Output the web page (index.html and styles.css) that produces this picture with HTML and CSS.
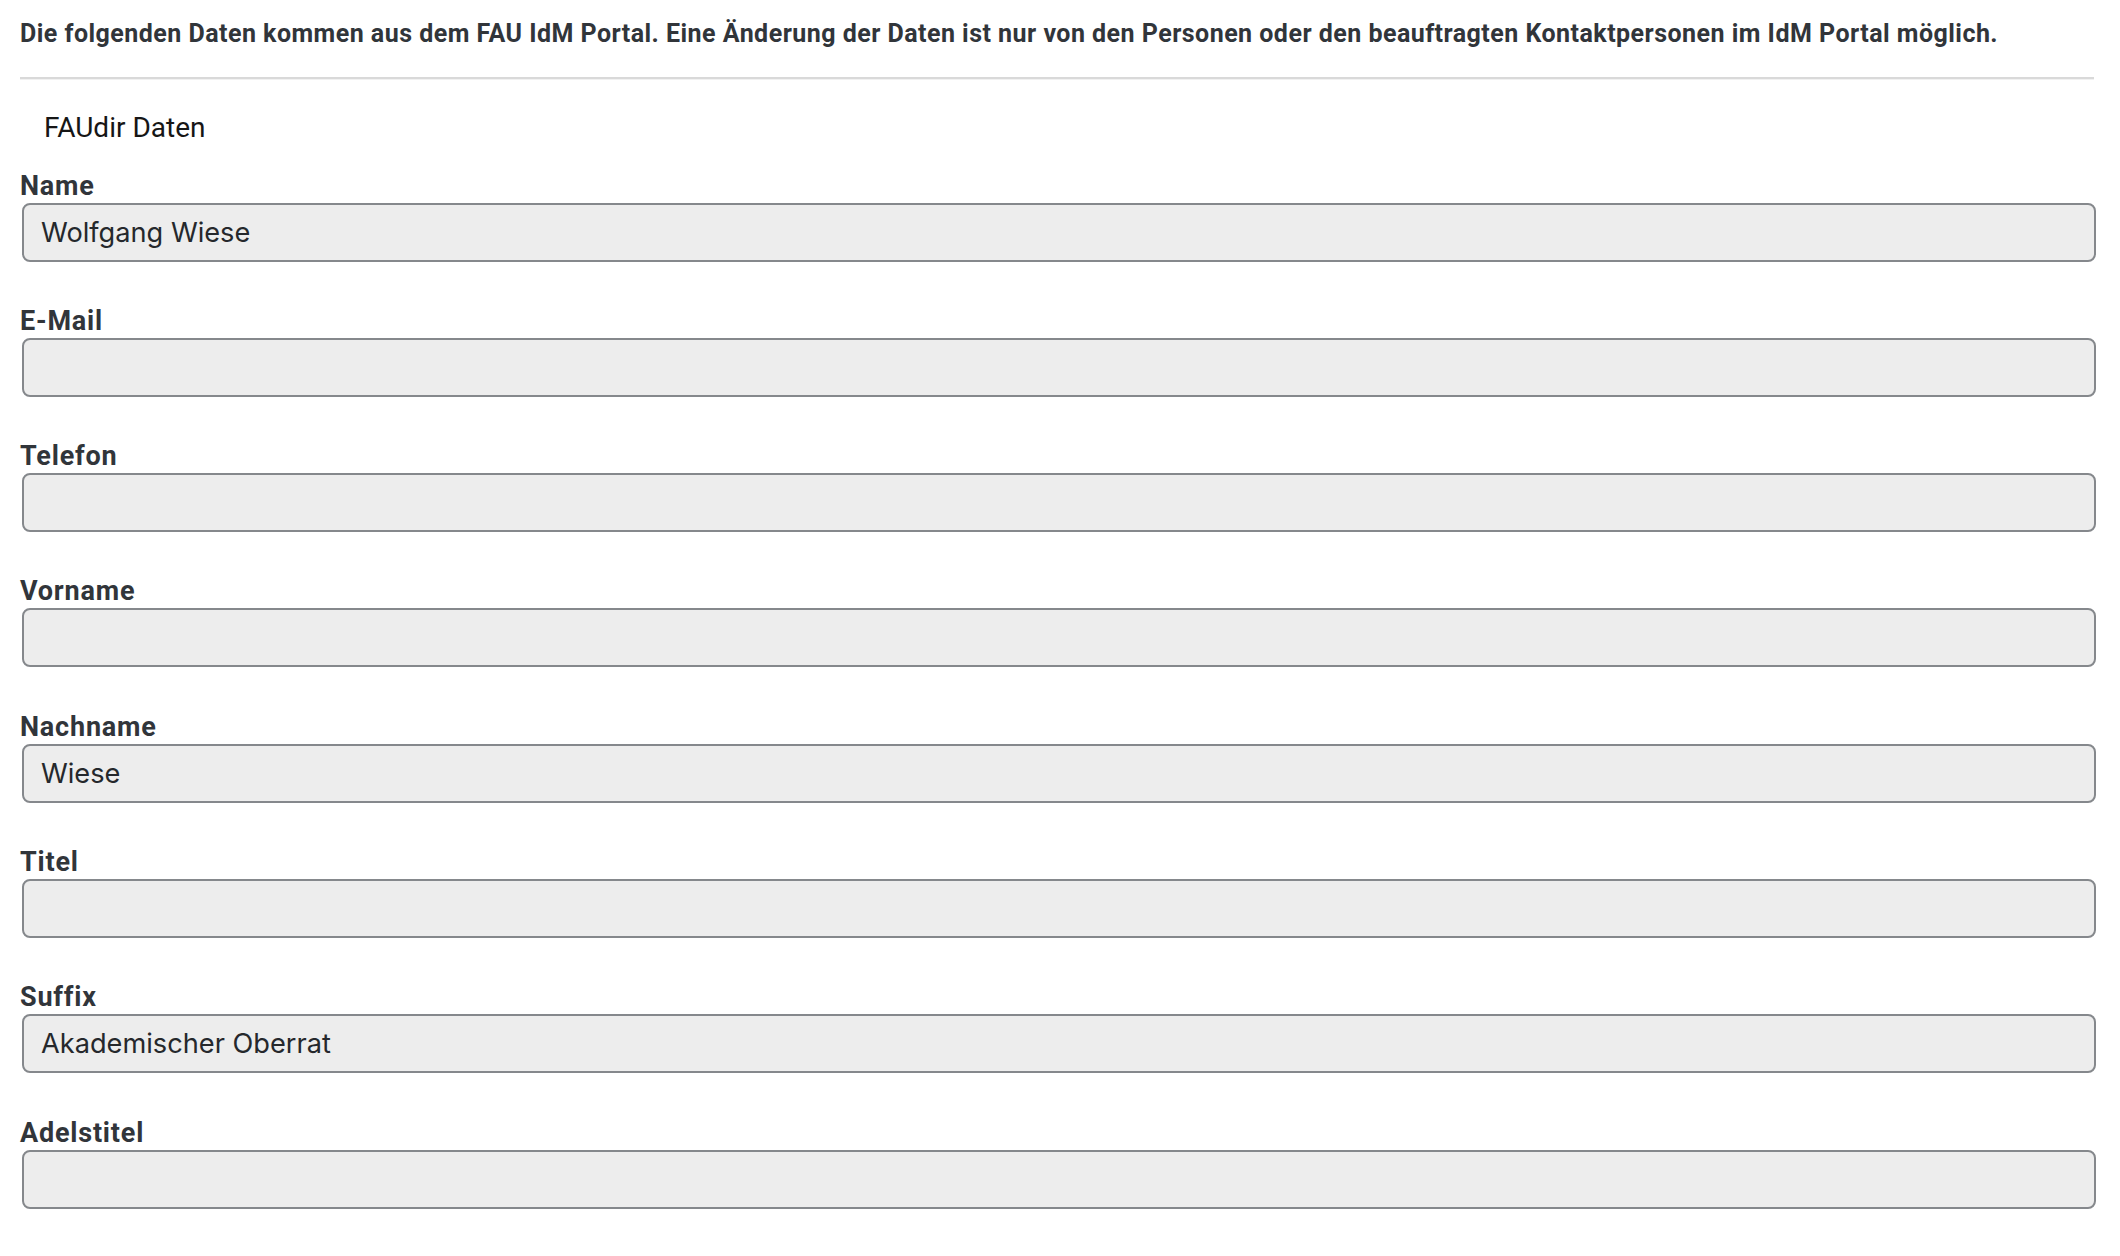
FILE: index.html
```html
<!DOCTYPE html>
<html lang="de">
<head>
<meta charset="utf-8">
<title>FAUdir Daten</title>
<link rel="stylesheet" href="styles.css">
</head>
<body>
<div class="page">
  <p class="notice">Die folgenden Daten kommen aus dem FAU IdM Portal. Eine Änderung der Daten ist nur von den Personen oder den beauftragten Kontaktpersonen im IdM Portal möglich.</p>
  <hr class="rule">
  <div class="legend">FAUdir Daten</div>
  <form class="fields">
    <div class="group"><label class="label" for="f-name">Name</label><input class="field" id="f-name" readonly value="Wolfgang Wiese"></div>
    <div class="group"><label class="label" for="f-mail">E-Mail</label><input class="field" id="f-mail" readonly value=""></div>
    <div class="group"><label class="label" for="f-tel">Telefon</label><input class="field" id="f-tel" readonly value=""></div>
    <div class="group"><label class="label" for="f-vor">Vorname</label><input class="field" id="f-vor" readonly value=""></div>
    <div class="group"><label class="label" for="f-nach">Nachname</label><input class="field" id="f-nach" readonly value="Wiese"></div>
    <div class="group"><label class="label" for="f-titel">Titel</label><input class="field" id="f-titel" readonly value=""></div>
    <div class="group"><label class="label" for="f-suffix">Suffix</label><input class="field" id="f-suffix" readonly value="Akademischer Oberrat"></div>
    <div class="group"><label class="label" for="f-adel">Adelstitel</label><input class="field" id="f-adel" readonly value=""></div>
  </form>
</div>
</body>
</html>
```

FILE: styles.css
```css
html, body {
  margin: 0;
  padding: 0;
  background: #ffffff;
}

.page {
  width: 2074px;
  padding: 16px 0 40px 20px;
  font-family: Roboto, "Liberation Sans", sans-serif;
  color: #33373c;
}

.notice {
  margin: 0;
  font-size: 25px;
  line-height: 36px;
  font-weight: 700;
  letter-spacing: 0.47px;
  color: #31353a;
}

.rule {
  margin: 25px 0 0 0;
  height: 0;
  border: 0;
  border-top: 2px solid #d9d9d9;
  border-bottom: 1px solid #f1f1f1;
}

.legend {
  margin-top: 28px;
  padding-left: 24px;
  font-size: 28px;
  line-height: 40px;
  font-weight: 400;
  color: #161616;
}

.fields {
  margin: 20.5px 0 0 0;
  display: flex;
  flex-direction: column;
  gap: 42.3px;
}

.group {
  display: flex;
  flex-direction: column;
}

.label {
  font-size: 27px;
  line-height: 34px;
  font-weight: 700;
  letter-spacing: 0.8px;
  color: #31353a;
}

.field {
  box-sizing: border-box;
  margin: 0 0 0 2px;
  width: 2074px;
  height: 59px;
  padding: 0 17px;
  border: 2px solid #85888c;
  border-radius: 8px;
  background: #ededed;
  font-family: Inter, "Noto Sans", sans-serif;
  font-size: 27.2px;
  color: #25282c;
  outline: none;
}
```
